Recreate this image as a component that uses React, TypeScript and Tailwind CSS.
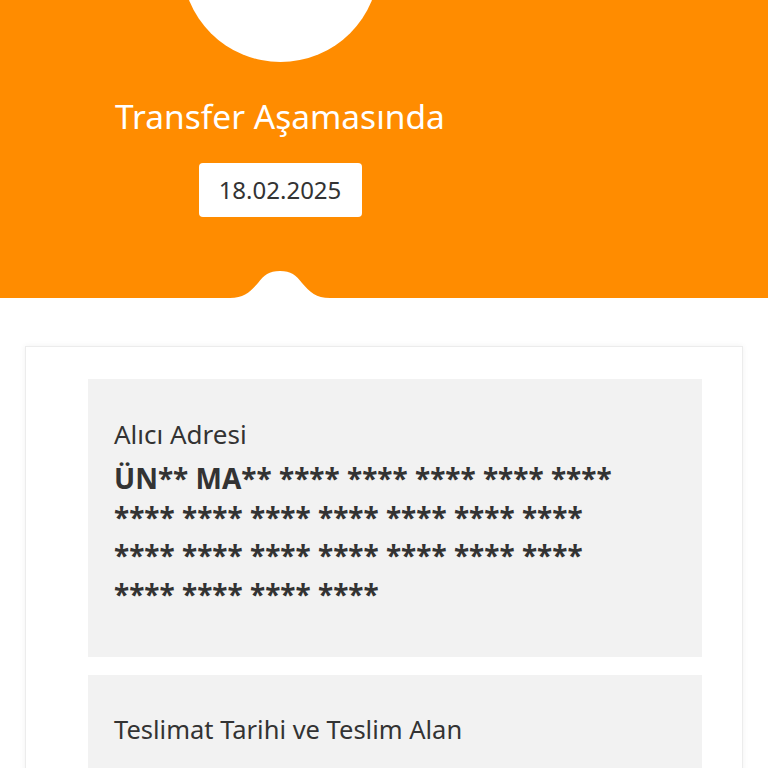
import React from 'react';

const addressStars = Array.from({ length: 23 }, () => '****').join(' ');

const Bump: React.FC = () => (
  <svg
    className="absolute bottom-0 left-[230px]"
    width="100"
    height="28"
    viewBox="0 0 100 28"
    fill="#ffffff"
  >
    <path d="M0 28 C14 28 20 22 28 13 C34 5 39 1 50 1 C61 1 66 5 72 13 C80 22 86 28 100 28 Z" />
  </svg>
);

export default function App() {
  return (
    <div className="min-h-screen w-full bg-white font-['Noto_Sans',sans-serif] text-[#333333]">
      <header className="relative h-[298px] overflow-hidden bg-[#ff8c00]">
        <div className="absolute left-[182px] top-[-135px] h-[197px] w-[197px] rounded-full bg-white" />
        <div className="flex w-[560px] flex-col items-center pt-[95px]">
          <h1 className="text-[33.5px] leading-[42px] font-normal text-white">Transfer Aşamasında</h1>
          <div className="mt-[26px] flex h-[54px] w-[163px] items-center justify-center rounded-[4px] bg-white text-[24px] text-[#333333]">
            18.02.2025
          </div>
        </div>
        <Bump />
      </header>

      <main className="mx-[25px] mt-[48px] border border-[#ececec] bg-white pl-[62px] pr-[40px] pt-[32px] pb-6 shadow-[0_0_6px_rgba(0,0,0,0.06)]">
        <section className="h-[278px] bg-[#f2f2f2] pl-[26px] pr-[28px] pt-[39px]">
          <p className="text-[26px] leading-[32px]">Alıcı Adresi</p>
          <p className="mt-[9px] w-[515px] text-[28px] leading-[38.5px] font-bold">
            ÜN** MA** {addressStars}
          </p>
        </section>
        <section className="mt-[18px] h-[200px] bg-[#f2f2f2] pl-[26px] pr-[28px] pt-[38px]">
          <p className="text-[25.5px] leading-[32px]">Teslimat Tarihi ve Teslim Alan</p>
        </section>
      </main>
    </div>
  );
}
